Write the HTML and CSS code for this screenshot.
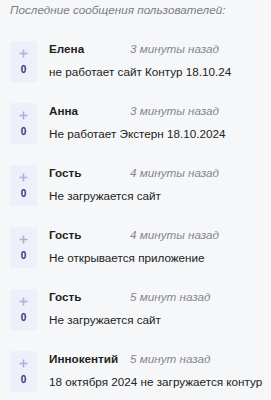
FILE: index.html
```html
<!DOCTYPE html>
<html lang="ru">
<head>
<meta charset="utf-8">
<link rel="stylesheet" href="styles.css">
</head>
<body>
<div class="title">Последние сообщения пользователей:</div>
<ul class="list">
  <li class="item">
    <div class="vote"><svg class="plus" viewBox="0 0 10 10"><path d="M5 0.5V9.5M0.5 5H9.5"/></svg><span class="count">0</span></div>
    <div class="body"><div class="meta"><span class="name">Елена</span><span class="time">3 минуты назад</span></div><div class="text">не работает сайт Контур 18.10.24</div></div>
  </li>
  <li class="item">
    <div class="vote"><svg class="plus" viewBox="0 0 10 10"><path d="M5 0.5V9.5M0.5 5H9.5"/></svg><span class="count">0</span></div>
    <div class="body"><div class="meta"><span class="name">Анна</span><span class="time">3 минуты назад</span></div><div class="text">Не работает Экстерн 18.10.2024</div></div>
  </li>
  <li class="item">
    <div class="vote"><svg class="plus" viewBox="0 0 10 10"><path d="M5 0.5V9.5M0.5 5H9.5"/></svg><span class="count">0</span></div>
    <div class="body"><div class="meta"><span class="name">Гость</span><span class="time">4 минуты назад</span></div><div class="text">Не загружается сайт</div></div>
  </li>
  <li class="item">
    <div class="vote"><svg class="plus" viewBox="0 0 10 10"><path d="M5 0.5V9.5M0.5 5H9.5"/></svg><span class="count">0</span></div>
    <div class="body"><div class="meta"><span class="name">Гость</span><span class="time">4 минуты назад</span></div><div class="text">Не открывается приложение</div></div>
  </li>
  <li class="item">
    <div class="vote"><svg class="plus" viewBox="0 0 10 10"><path d="M5 0.5V9.5M0.5 5H9.5"/></svg><span class="count">0</span></div>
    <div class="body"><div class="meta"><span class="name">Гость</span><span class="time">5 минут назад</span></div><div class="text">Не загружается сайт</div></div>
  </li>
  <li class="item">
    <div class="vote"><svg class="plus" viewBox="0 0 10 10"><path d="M5 0.5V9.5M0.5 5H9.5"/></svg><span class="count">0</span></div>
    <div class="body"><div class="meta"><span class="name">Иннокентий</span><span class="time">5 минут назад</span></div><div class="text">18 октября 2024 не загружается контур</div></div>
  </li>
</ul>
</body>
</html>
```
FILE: styles.css
```css
html, body {
  margin: 0;
  padding: 0;
  background: #f6f7f9;
}
body {
  font-family: "Liberation Sans", Arial, sans-serif;
  color: #222;
  font-size: 11.7px;
}
.title {
  font-style: italic;
  color: #7a7d85;
  font-size: 11.7px;
  line-height: 16px;
  padding: 2px 10px 0;
}
.list {
  list-style: none;
  margin: 23px 0 0;
  padding: 0 0 0 10px;
  display: flex;
  flex-direction: column;
  gap: 21px;
}
.item {
  display: flex;
  gap: 12px;
}
.vote {
  width: 27px;
  height: 41px;
  flex: none;
  background: #edf0fa;
  border-radius: 2px;
  display: flex;
  flex-direction: column;
  align-items: center;
  padding-top: 8px;
  box-sizing: border-box;
}
.plus {
  width: 9px;
  height: 9px;
  fill: none;
  stroke: #aab2dc;
  stroke-width: 1.8;
}
.count {
  margin-top: 6px;
  font-size: 10px;
  font-weight: bold;
  color: #2f3570;
  line-height: 12px;
}
.body {
  display: flex;
  flex-direction: column;
  gap: 7px;
}
.meta {
  display: flex;
  gap: 11px;
  line-height: 16px;
}
.name {
  font-weight: bold;
  min-width: 70px;
  color: #1f1f1f;
}
.time {
  font-style: italic;
  color: #85878c;
}
.text {
  line-height: 16px;
  color: #222;
}
```
